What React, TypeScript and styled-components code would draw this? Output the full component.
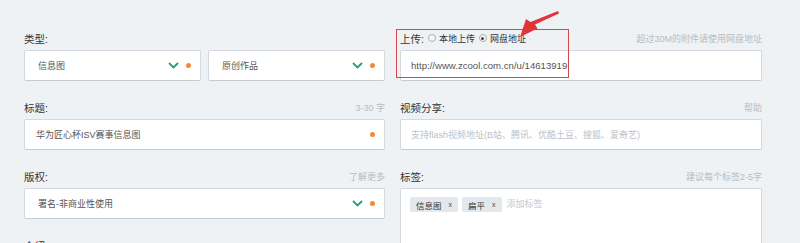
import React from 'react';
import styled, { createGlobalStyle } from 'styled-components';

const GlobalStyle = createGlobalStyle`
  html, body {
    margin: 0;
    padding: 0;
    background: #eff2f5;
  }
  body {
    font-family: "Liberation Sans", "Noto Sans CJK SC", sans-serif;
    color: #333;
    overflow: hidden;
  }
`;

const Page = styled.div`
  display: flex;
  gap: 15px;
  padding: 28px 0 0 24px;
`;

const Column = styled.div<{ $width: number }>`
  width: ${(p) => p.$width}px;
  display: flex;
  flex-direction: column;
  gap: 16px;
`;

const Field = styled.div`
  position: relative;
  display: flex;
  flex-direction: column;
`;

const LabelRow = styled.div`
  height: 20px;
  margin-bottom: 2px;
  display: flex;
  align-items: center;
  justify-content: space-between;
`;

const Label = styled.span`
  font-size: 10.5px;
  color: #333;
  display: flex;
  align-items: center;
`;

const Hint = styled.span`
  font-size: 9px;
  color: #b6bcc3;
`;

const Pair = styled.div`
  display: flex;
  gap: 7px;
`;

const Box = styled.div<{ $tall?: boolean; $half?: boolean }>`
  flex: ${(p) => (p.$half ? '1' : 'none')};
  height: ${(p) => (p.$tall ? '100px' : '31px')};
  box-sizing: border-box;
  background: #fff;
  border: 1px solid #d3d9df;
  border-bottom-color: #c6ccd3;
  border-radius: 2px;
  display: flex;
  align-items: ${(p) => (p.$tall ? 'flex-start' : 'center')};
  padding: ${(p) => (p.$tall ? '8px 9px' : '0 9px 0 10px')};
  gap: 4px;
`;

const Value = styled.span<{ $muted?: boolean; $indent?: number }>`
  flex: 1;
  font-size: 9px;
  color: ${(p) => (p.$muted ? '#bcc1c7' : '#555')};
  padding-left: ${(p) => p.$indent ?? 0}px;
  white-space: nowrap;
`;

const Url = styled.span`
  flex: 1;
  font-size: 9.6px;
  color: #555;
`;

const Dot = styled.span`
  width: 5px;
  height: 5px;
  border-radius: 50%;
  background: #f0893a;
  margin-left: 3px;
`;

const Radio = styled.span<{ $checked?: boolean }>`
  width: 6px;
  height: 6px;
  border-radius: 50%;
  border: 1px solid #a9adb2;
  background: #f7f7f7;
  display: inline-flex;
  align-items: center;
  justify-content: center;
  margin: 0 3px 0 4px;
  &::after {
    content: '';
    width: 3px;
    height: 3px;
    border-radius: 50%;
    background: ${(p) => (p.$checked ? '#444' : 'transparent')};
  }
`;

const RadioText = styled.span`
  font-size: 9px;
  color: #333;
`;

const Highlight = styled.div`
  position: absolute;
  left: -4px;
  top: 1px;
  width: 173px;
  height: 49px;
  border: 1.5px solid #d9464a;
  box-sizing: border-box;
  pointer-events: none;
`;

const Arrow = styled.svg`
  position: absolute;
  left: 117px;
  top: -19px;
`;

const Tag = styled.span`
  height: 15px;
  display: inline-flex;
  align-items: center;
  gap: 7px;
  padding: 0 6px;
  background: #e3e8ed;
  border-radius: 2px;
  font-size: 8.5px;
  color: #333;
  small {
    font-size: 7px;
    color: #444;
  }
`;

const TagInput = styled.span`
  font-size: 9px;
  color: #c3c8cd;
  line-height: 15px;
  margin-left: 1px;
`;

function Chevron() {
  return (
    <svg width="11" height="7" viewBox="0 0 11 7">
      <polyline points="1,1 5.5,5.5 10,1" fill="none" stroke="#1ca086" strokeWidth="1.8" />
    </svg>
  );
}

function Select({ value, half }: { value: string; half?: boolean }) {
  return (
    <Box $half={half}>
      <Value $indent={3}>{value}</Value>
      <Chevron />
      <Dot />
    </Box>
  );
}

export default function App() {
  return (
    <>
      <GlobalStyle />
      <Page>
        <Column $width={361}>
          <Field>
            <LabelRow>
              <Label>类型:</Label>
            </LabelRow>
            <Pair>
              <Select value="信息图" half />
              <Select value="原创作品" half />
            </Pair>
          </Field>

          <Field>
            <LabelRow>
              <Label>标题:</Label>
              <Hint>3-30 字</Hint>
            </LabelRow>
            <Box>
              <Value $indent={1}>华为匠心杯ISV赛事信息图</Value>
              <Dot />
            </Box>
          </Field>

          <Field>
            <LabelRow>
              <Label>版权:</Label>
              <Hint>了解更多</Hint>
            </LabelRow>
            <Select value="署名-非商业性使用" />
          </Field>

          <Field>
            <LabelRow>
              <Label>介绍:</Label>
            </LabelRow>
          </Field>
        </Column>

        <Column $width={362}>
          <Field>
            <LabelRow>
              <Label>
                上传:
                <Radio />
                <RadioText>本地上传</RadioText>
                <Radio $checked />
                <RadioText>网盘地址</RadioText>
              </Label>
              <Hint>超过30M的附件请使用网盘地址</Hint>
            </LabelRow>
            <Box>
              <Url>http://www.zcool.com.cn/u/14613919</Url>
            </Box>
            <Highlight />
            <Arrow width="44" height="30" viewBox="0 0 44 30">
              <polygon points="41,2 42,4.5 18,15.5 20.5,19.5 3,28 9,10 13.5,13" fill="#e0363b" />
            </Arrow>
          </Field>

          <Field>
            <LabelRow>
              <Label>视频分享:</Label>
              <Hint>帮助</Hint>
            </LabelRow>
            <Box>
              <Value $muted>支持flash视频地址(B站、腾讯、优酷土豆、搜狐、爱奇艺)</Value>
            </Box>
          </Field>

          <Field>
            <LabelRow>
              <Label>标签:</Label>
              <Hint>建议每个标签2-5字</Hint>
            </LabelRow>
            <Box $tall>
              <Tag>
                信息图<small>x</small>
              </Tag>
              <Tag>
                扁平<small>x</small>
              </Tag>
              <TagInput>添加标签</TagInput>
            </Box>
          </Field>
        </Column>
      </Page>
    </>
  );
}
